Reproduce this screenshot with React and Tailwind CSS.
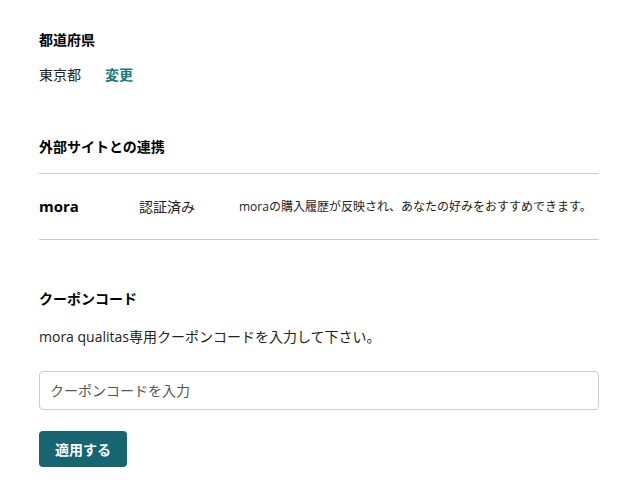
import { useState } from "react";

const font = { fontFamily: '"Open Sans", "Noto Sans CJK JP", sans-serif' };

const App = () => {
  const [code, setCode] = useState("");

  return (
    <div className="w-[637px] h-[495px] bg-white text-[#222]" style={font}>
      <div className="w-[560px] ml-[39px] pt-[30px]">
        {/* 都道府県 */}
        <h3 className="text-[14px] font-bold leading-[20px] text-black">都道府県</h3>
        <div className="flex items-center mt-[15px] text-[14px] leading-[20px]">
          <span className="w-[66px]">東京都</span>
          <button className="font-bold text-[#177a7a]">変更</button>
        </div>

        {/* 外部サイトとの連携 */}
        <h3 className="mt-[52px] text-[14px] font-bold leading-[20px] text-black">外部サイトとの連携</h3>
        <div className="mt-[16px] border-t border-b border-[#cccccc] h-[67px] flex items-center">
          <span className="w-[100px] text-[15px] font-bold text-black">mora</span>
          <span className="w-[100px] text-[14px]">認証済み</span>
          <span className="text-[12px]">moraの購入履歴が反映され、あなたの好みをおすすめできます。</span>
        </div>

        {/* クーポンコード */}
        <h3 className="mt-[49px] text-[14px] font-bold leading-[20px] text-black">クーポンコード</h3>
        <p className="mt-[18px] text-[14px] leading-[20px]">mora qualitas専用クーポンコードを入力して下さい。</p>
        <input
          value={code}
          onChange={(e) => setCode(e.target.value)}
          placeholder="クーポンコードを入力"
          className="mt-[24px] w-full h-[39px] border border-[#cccccc] rounded px-[10px] text-[14px] placeholder:text-[#555] focus:outline-none"
        />
        <button className="mt-[21px] h-[36px] w-[88px] rounded bg-[#176570] text-white text-[14px] font-bold">
          適用する
        </button>
      </div>
    </div>
  );
};

export default App;
